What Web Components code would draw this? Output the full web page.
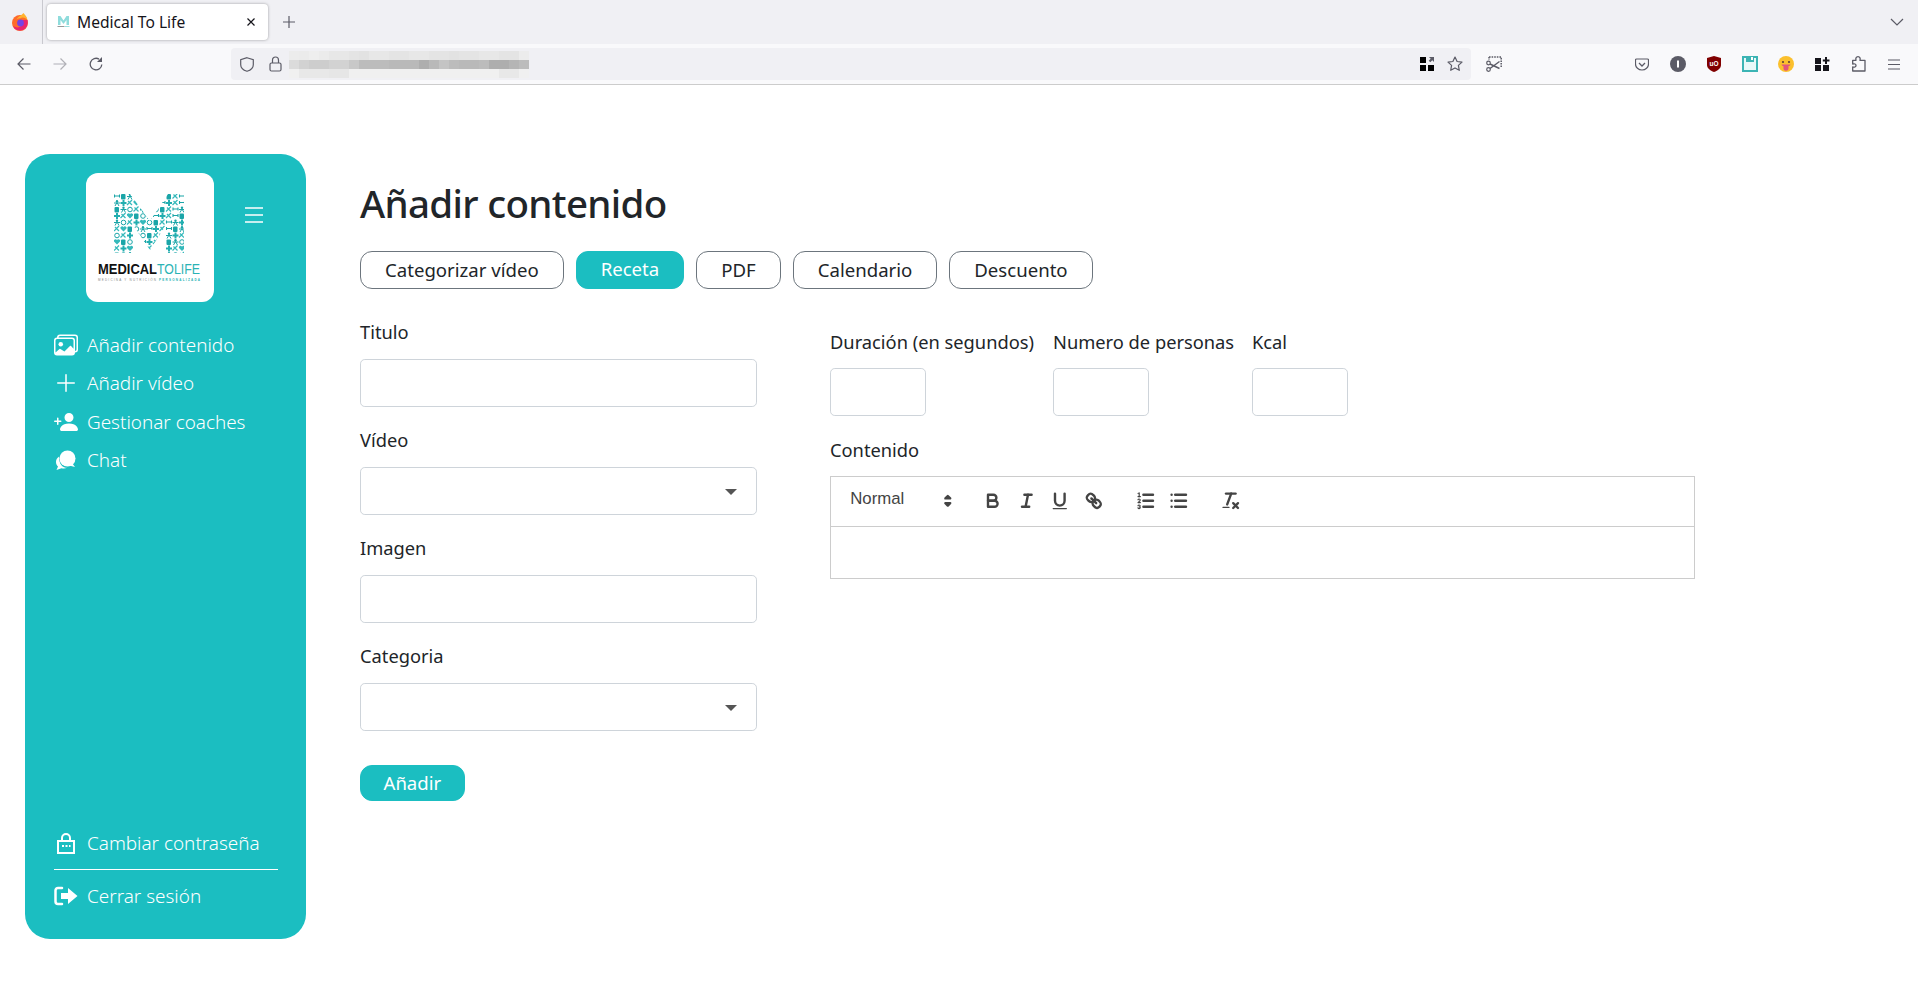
<!DOCTYPE html>
<html lang="es">
<head>
<meta charset="utf-8">
<title>Medical To Life</title>
<style>
  html, body { margin: 0; padding: 0; background: #fff; }
  body { font-family: "Noto Sans", sans-serif; color: #212529; }
</style>
</head>
<body>
<app-root></app-root>
<script>
// base class: every element just renders getStyles + getMarkup in its shadow root
class BaseElement extends HTMLElement
{
    constructor()
    {
        super();
        this.attachShadow({ mode: 'open' });
    }
    getStyles() { return ''; }
    getMarkup() { return ''; }
    connectedCallback()
    {
        const template = document.createElement('template');
        template.innerHTML = `<style>${this.getStyles()}</style>${this.getMarkup()}`;
        this.shadowRoot.appendChild(template.content.cloneNode(true));
    }
}

const stroke = 'fill="none" stroke="currentColor"';

class BrowserChrome extends BaseElement
{
    getStyles()
    {
        return `
            :host { display: block; font-family: "Noto Sans", sans-serif; color: #15141a; }
            svg { display: block; flex: none; }
            .tabs { height: 44px; background: #f0f0f4; display: flex; align-items: flex-start; position: relative; }
            .ff { margin: 13px 0 0 11px; }
            .sep { width: 1px; height: 44px; background: #c9c9cf; margin-left: 13px; }
            .tab { width: 221px; height: 36px; margin: 4px 0 0 4px; box-sizing: border-box; background: #fff; border-radius: 4px;
                   box-shadow: 0 0 3px rgba(0,0,0,.35); display: flex; align-items: center; padding: 0 12px 0 10px; font-size: 15.600px; }
            .tab span { margin-left: 7px; flex: 1; }
            .newtab { margin: 15px 0 0 15px; color: #5b5b66; }
            .chev { position: absolute; right: 14px; top: 18px; color: #5b5b66; }
            .bar { height: 40px; background: #f9f9fb; border-bottom: 1px solid #ccc; display: flex; align-items: center; color: #5b5b66; }
            .url { width: 1240px; height: 32px; margin-left: 128px; background: #f0f0f4; border-radius: 4px; display: flex; align-items: center; position: relative; }
            .blur { display: grid; grid-template-columns: repeat(24, 10px); grid-auto-rows: 9px; }
            .blur i { display: block; }
        `;
    }
    getBlur()
    {
        const rows = [
            'ecebeeebe7e7e4e2e7e7e4e4e7e7e4e4e2e4e4e7e7e4e4ec',
            'dbd2cdcdd2d2c8bcbcbcb9b9b9aeb9c4bcb9b9bcaeaeb5bc',
            'f0e8e8e8e6e6f0f0f0f0f0f0f0f0f0f0f0f0f0f0f0e8e8f0'
        ];
        return rows.map(r =>
        {
            let cells = '';
            for (let i = 0; i < 24; i++)
            {
                const g = r.substr(i * 2, 2);
                cells += `<i style="background:#${g}${g}${g}"></i>`;
            }
            return cells;
        }).join('');
    }
    getMarkup()
    {
        return `
        <div class="tabs">
            <svg class="ff" width="18" height="18" viewBox="0 0 18 18">
                <circle cx="9" cy="10" r="8" fill="#ff6a2b"/>
                <path d="M16.500 7c1 4-1 10.500-7.500 10.500C6 17.500 3 16 2 13c3 2 7 2 9-1 1-2 0-4-2-5z" fill="#e8256f"/>
                <circle cx="9.500" cy="10" r="3.400" fill="#7542e5"/>
                <path d="M12.500 0c1.500 2 3.500 3.500 4 7-1.500-2-5-3.500-7.500-1.500-1.500-.5-3 .5-3.500 1.500C6 4 9 3.500 12.500 0z" fill="#ffb32f"/>
            </svg>
            <div class="sep"></div>
            <div class="tab">
                <svg width="13" height="14" viewBox="0 0 13 14">
                    <path d="M1 1h2.500L6.500 5.500 9.500 1H12v9H9.500V5L6.500 9 3.500 5v5H1z" fill="#8fdcdc"/>
                    <rect x="0.500" y="11" width="7" height="1" fill="#999"/><rect x="7.500" y="11" width="5" height="1" fill="#9bdede"/>
                </svg>
                <span>Medical To Life</span>
                <svg width="10" height="10" viewBox="0 0 10 10"><path d="M1.500 1.500l7 7M8.500 1.500l-7 7" ${stroke} stroke-width="1.200"/></svg>
            </div>
            <svg class="newtab" width="12" height="14" viewBox="0 0 12 14"><path d="M6 1v12M0 7h12" ${stroke} stroke-width="1.200"/></svg>
            <svg class="chev" width="14" height="8" viewBox="0 0 14 8"><path d="M1 1l6 6 6-6" ${stroke} stroke-width="1.200"/></svg>
        </div>
        <div class="bar">
            <svg style="margin-left:17px" width="14" height="14" viewBox="0 0 14 14"><path d="M13.500 7H1.500M6.500 1.500L1 7l5.500 5.500" ${stroke} stroke-width="1.200"/></svg>
            <svg style="margin-left:22px;opacity:.45" width="14" height="14" viewBox="0 0 14 14"><path d="M.5 7h12M7.500 1.500L13 7l-5.500 5.500" ${stroke} stroke-width="1.200"/></svg>
            <svg style="margin-left:22px" width="14" height="14" viewBox="0 0 14 14"><path d="M12.800 7.500A5.800 5.800 0 1 1 10 2.100" ${stroke} stroke-width="1.300"/><path d="M13 0v5H8z" fill="currentColor"/></svg>
            <div class="url">
                <svg style="margin-left:9px" width="14" height="15" viewBox="0 0 14 15"><path d="M7 .7l6.300 2v5c0 3.300-3 5.500-6.300 6.600C3.700 13.200.7 11 .7 7.700v-5z" ${stroke} stroke-width="1.200"/></svg>
                <svg style="margin-left:15px" width="13" height="16" viewBox="0 0 13 16"><rect x="1" y="7" width="11" height="8" rx="1.500" ${stroke} stroke-width="1.200"/><path d="M3.500 7V4a3 3 0 0 1 6 0v3" ${stroke} stroke-width="1.200"/></svg>
                <div class="blur" style="margin-left:7px">${this.getBlur()}</div>
                <svg style="position:absolute;left:1189px" width="14" height="14" viewBox="0 0 14 14" fill="#000"><rect width="6" height="6"/><rect y="8" width="6" height="6"/><rect x="8" y="8" width="6" height="6"/><path d="M9 0h5v5l-1.700-1.700-2 2-1.600-1.600 2-2z" fill="#5b5b66"/></svg>
                <svg style="position:absolute;left:1216px" width="16" height="16" viewBox="0 0 16 16"><path d="M8 1l2.100 4.500 4.900.6-3.600 3.300.9 4.900L8 11.900l-4.300 2.400.9-4.900L1 6.100l4.900-.6z" ${stroke} stroke-width="1.200" stroke-linejoin="round"/></svg>
            </div>
            <svg style="margin-left:15px" width="16" height="16" viewBox="0 0 16 16"><path d="M3 1h12.200v10" ${stroke} stroke-width="1.500" stroke-dasharray="1.600 1"/><path d="M3 1v3" ${stroke} stroke-width="1.500" stroke-dasharray="1.600 1"/><circle cx="2.500" cy="7" r="1.800" ${stroke} stroke-width="1.200"/><circle cx="2.500" cy="13.500" r="1.800" ${stroke} stroke-width="1.200"/><path d="M4 8l9.500 4.500M4 12.500L13.500 5.500" ${stroke} stroke-width="1.400"/></svg>
            <svg style="margin-left:133px" width="14" height="13" viewBox="0 0 14 13"><path d="M1.500 1h11c.5 0 1 .4 1 1v4c0 3.500-3 6-6.500 6S.5 9.500.5 6V2c0-.6.500-1 1-1z" ${stroke} stroke-width="1.200"/><path d="M4 5l3 3 3-3" ${stroke} stroke-width="1.300"/></svg>
            <svg style="margin-left:21px" width="16" height="16" viewBox="0 0 16 16"><circle cx="8" cy="8" r="8" fill="#5b5b66"/><rect x="7" y="4.500" width="2" height="7" fill="#fff"/></svg>
            <svg style="margin-left:21px" width="14" height="16" viewBox="0 0 14 16"><path d="M7 0l7 2v7c0 3-3 5.500-7 7-4-1.500-7-4-7-7V2z" fill="#800000"/><text x="7" y="10" font-size="6.500" font-family="Liberation Sans" font-weight="700" fill="#fff" text-anchor="middle">uO</text></svg>
            <svg style="margin-left:21px" width="16" height="16" viewBox="0 0 16 16"><rect x="1" y="1" width="14" height="14" fill="#e8f8f8" stroke="#3cb4b4" stroke-width="2"/><rect x="4" y="0" width="8" height="6" fill="#3cb4b4"/><rect x="9" y="1" width="2" height="3" fill="#fff"/></svg>
            <svg style="margin-left:20px" width="16" height="16" viewBox="0 0 16 16"><circle cx="8" cy="8" r="8" fill="#fbc02d"/><circle cx="5" cy="6" r="1.100" fill="#5d4037"/><circle cx="11" cy="6" r="1.100" fill="#5d4037"/><path d="M3.500 8.500h9c-.4 1-1.200 1.500-2 1.700v2.300c0 1.300-1.100 2.300-2.500 2.300s-2.500-1-2.500-2.300v-2.300c-.8-.2-1.600-.7-2-1.700z" fill="#e2557b"/></svg>
            <svg style="margin-left:21px" width="15" height="14" viewBox="0 0 15 14" fill="#15141a"><rect width="6" height="6" y="1"/><rect y="8" width="6" height="6"/><rect x="8" y="8" width="6" height="6"/><path d="M10 0h2v2.500h2.500v2H12V7h-2V4.500H7.800v-2H10z"/></svg>
            <svg style="margin-left:22px" width="14" height="16" viewBox="0 0 14 16"><path d="M.7 4.300H4C3.500 2.500 4 .7 6 .7S8.500 2.500 8 4.300h5V15H.7v-4c1.800.5 3.300 0 3.300-1.500S2.500 7.500.7 8z" ${stroke} stroke-width="1.300" stroke-linejoin="round"/></svg>
            <svg style="margin-left:22px" width="12" height="11" viewBox="0 0 12 11"><path d="M0 1h12M0 5.500h12M0 10h12" ${stroke} stroke-width="1.200"/></svg>
        </div>`;
    }
}
customElements.define('browser-chrome', BrowserChrome);

class BrandLogo extends BaseElement
{
    getStyles()
    {
        return `
            :host { display: block; width: 128px; height: 129px; background: #fff; border-radius: 12px; }
            svg { display: block; }
        `;
    }
    // the M is a mosaic of tiny medical pictograms
    getMosaic()
    {
        const shapes = [
            (x, y) => `<path d="M${x} ${y + 2.500}h6M${x + .5} ${y + 1}v3M${x + 5.500} ${y + 1}v3" fill="none" stroke="#1aa5a8" stroke-width="1.100"/>`,
            (x, y) => `<circle cx="${x + 3}" cy="${y + 3}" r="2.300" fill="none" stroke="#1aa5a8" stroke-width="1"/>`,
            (x, y) => `<path d="M${x + 2} ${y}h2v2h2v2h-2v2h-2v-2h-2v-2h2z" fill="#22aeb0"/>`,
            (x, y) => `<rect x="${x + .5}" y="${y + .5}" width="4.500" height="5.500" rx="1" fill="#1aa5a8"/>`,
            (x, y) => `<path d="M${x + 3} ${y + 5.500}L${x} ${y + 2.500}a1.600 1.600 0 0 1 3-1.200 1.600 1.600 0 0 1 3 1.200z" fill="#35b9bb"/>`,
            (x, y) => `<circle cx="${x + 3}" cy="${y + 1.200}" r="1.200" fill="#1aa5a8"/><path d="M${x + 1} ${y + 6}l2-3.500 2 3.500M${x} ${y + 3}h6" fill="none" stroke="#1aa5a8" stroke-width="1"/>`,
            (x, y) => `<path d="M${x} ${y + 5}L${x + 5} ${y}M${x + 1} ${y + 1}l4 4" fill="none" stroke="#35b9bb" stroke-width="1.200"/>`
        ];
        const order = [0, 3, 5, 1, 6, 2, 4, 1, 3, 6, 0, 5, 2, 6, 4, 3, 1, 5, 0, 2, 6];
        let out = '';
        let k = 0;
        for (let y = 20.500; y < 80; y += 6.500)
        {
            for (let x = 28; x < 98; x += 6.500)
            {
                out += shapes[order[k % order.length]](x, y);
                k += 1;
            }
        }
        return out;
    }
    getMarkup()
    {
        return `
        <svg width="128" height="129" viewBox="0 0 128 129">
            <defs>
                <clipPath id="em"><path d="M28 21h16l20 27 18-27h16v59H80V52L64 77 47 52v28H28z"/></clipPath>
            </defs>
            <g clip-path="url(#em)">${this.getMosaic()}</g>
            <text x="12" y="100.500" font-family="Liberation Sans, sans-serif" font-weight="700" font-size="14" textLength="59" lengthAdjust="spacingAndGlyphs" fill="#111">MEDICAL</text>
            <text x="71" y="100.500" font-family="Liberation Sans, sans-serif" font-size="14" textLength="43" lengthAdjust="spacingAndGlyphs" fill="#2bb3b5">TOLIFE</text>
            <text x="12" y="107.500" font-family="Liberation Sans, sans-serif" font-size="3" textLength="58" fill="#888">MEDICINA Y NUTRICIÓN</text>
            <text x="73" y="107.500" font-family="Liberation Sans, sans-serif" font-weight="700" font-size="3" textLength="41" fill="#2bb3b5">PERSONALIZADA</text>
        </svg>`;
    }
}
customElements.define('brand-logo', BrandLogo);

class NavItem extends BaseElement
{
    getStyles()
    {
        return `
            :host { display: flex; align-items: center; height: 38.300px; color: #fff; font-size: 18.900px; font-weight: 300; }
            .ico { width: 24px; height: 24px; margin-right: 9px; display: flex; align-items: center; justify-content: center; flex: none; }
        `;
    }
    getMarkup()
    {
        return `<span class="ico"><slot name="icon"></slot></span><slot></slot>`;
    }
}
customElements.define('nav-item', NavItem);

class SideBar extends BaseElement
{
    getStyles()
    {
        return `
            :host { display: flex; flex-direction: column; box-sizing: border-box; width: 281px; height: 785px; flex: none;
                    background: #1bbec1; border-radius: 25px; padding: 19px 28px 24px 29px; }
            .top { display: flex; align-items: flex-start; margin-left: 32px; margin-bottom: 24px; }
            .burger { margin: 34px 0 0 31px; display: block; }
            .grow { flex: 1; }
            hr { border: 0; height: 1px; background: #fff; margin: 7px 0 7px; }
        `;
    }
    getMarkup()
    {
        return `
        <div class="top">
            <brand-logo></brand-logo>
            <svg class="burger" width="18" height="16" viewBox="0 0 18 16"><path d="M0 1h18M0 8h18M0 15h18" fill="none" stroke="#fff" stroke-width="1.300"/></svg>
        </div>
        <nav>
            <nav-item><svg slot="icon" width="24" height="24" viewBox="0 0 16 16" fill="#fff"><path d="M4.502 9a1.500 1.500 0 1 0 0-3 1.500 1.500 0 0 0 0 3z"/><path d="M14.002 13a2 2 0 0 1-2 2h-10a2 2 0 0 1-2-2V5A2 2 0 0 1 2 3a2 2 0 0 1 2-2h10a2 2 0 0 1 2 2v8a2 2 0 0 1-1.998 2zM14 2H4a1 1 0 0 0-1 1h9.002a2 2 0 0 1 2 2v7A1 1 0 0 0 15 11V3a1 1 0 0 0-1-1zM2.002 4a1 1 0 0 0-1 1v8l2.646-2.354a.5.5 0 0 1 .63-.062l2.660 1.773 3.710-3.710a.5.5 0 0 1 .577-.094l1.777 1.947V5a1 1 0 0 0-1-1h-10z"/></svg>Añadir contenido</nav-item>
            <nav-item><svg slot="icon" width="24" height="24" viewBox="0 0 16 16" fill="#fff"><path fill-rule="evenodd" d="M8 2a.5.5 0 0 1 .5.5v5h5a.5.5 0 0 1 0 1h-5v5a.5.5 0 0 1-1 0v-5h-5a.5.5 0 0 1 0-1h5v-5A.5.5 0 0 1 8 2Z"/></svg>Añadir vídeo</nav-item>
            <nav-item><svg slot="icon" width="24" height="24" viewBox="0 0 16 16" fill="#fff"><g transform="translate(16 0) scale(-1 1)"><path d="M1 14s-1 0-1-1 1-4 6-4 6 3 6 4-1 1-1 1H1zm5-6a3 3 0 1 0 0-6 3 3 0 0 0 0 6z"/><path fill-rule="evenodd" d="M13.500 5a.5.5 0 0 1 .5.5V7h1.500a.5.5 0 0 1 0 1H14v1.500a.5.5 0 0 1-1 0V8h-1.500a.5.5 0 0 1 0-1H13V5.500a.5.5 0 0 1 .5-.5z"/></g></svg>Gestionar coaches</nav-item>
            <nav-item><svg slot="icon" width="22" height="22" viewBox="0 0 22 22" fill="#fff"><circle cx="12.500" cy="9.500" r="8"/><path d="M17 14l3 4-6-1.500z"/><path d="M4.200 7.500C1.800 9 1 11 1 13c0 2 1 3.500 2 4.500L1.500 21l5-1.800c2 .6 4 .4 5.600-.4-4 0-8.400-3-7.900-11.300z"/></svg>Chat</nav-item>
        </nav>
        <div class="grow"></div>
        <nav-item><svg slot="icon" width="20" height="22" viewBox="0 0 20 22"><path d="M6 9V6a4 4 0 0 1 8 0v3" fill="none" stroke="#fff" stroke-width="2"/><rect x="2" y="9" width="16" height="12" fill="none" stroke="#fff" stroke-width="2"/><path d="M6 14h2M9.500 14h2M13 14h1.500" stroke="#fff" stroke-width="2"/></svg>Cambiar contraseña</nav-item>
        <hr>
        <nav-item><svg slot="icon" width="24" height="20" viewBox="0 0 24 20" fill="#fff"><path d="M8 2H4a2.500 2.500 0 0 0-2.500 2.500v11A2.500 2.500 0 0 0 4 18h4" fill="none" stroke="#fff" stroke-width="2.500" stroke-linecap="round"/><path d="M7 7h7V2l9.500 8-9.500 8v-5H7z"/></svg>Cerrar sesión</nav-item>`;
    }
}
customElements.define('side-bar', SideBar);

class PillButton extends BaseElement
{
    getStyles()
    {
        return `
            :host { display: inline-flex; align-items: center; justify-content: center; box-sizing: border-box; height: 38px; padding: 0 24px 1px;
                    border: 1px solid #6c757d; border-radius: 12px; font-size: 18.600px; color: #212529; background: #fff; white-space: nowrap; }
            :host([active]) { background: #1bbec1; border-color: #1bbec1; color: #fff; padding-bottom: 3px; }
        `;
    }
    getMarkup() { return `<slot></slot>`; }
}
customElements.define('pill-button', PillButton);

class FormField extends BaseElement
{
    getStyles()
    {
        return `
            :host { display: block; font-size: 18.300px; }
            label { display: block; height: 27px; line-height: 27.500px; margin-bottom: var(--label-gap, 14px); white-space: nowrap; }
            .box { box-sizing: border-box; height: 48px; width: var(--box-width, 100%); border: 1px solid #ced4da; border-radius: 4.800px; background: #fff; position: relative; }
            :host([select]) .box::after { content: ""; position: absolute; right: 19px; top: 21px; border: 6px solid transparent; border-top: 6px solid #555; border-bottom: 0; }
        `;
    }
    getMarkup()
    {
        return `<label><slot></slot></label><div class="box"></div>`;
    }
}
customElements.define('form-field', FormField);

class RichEditor extends BaseElement
{
    getStyles()
    {
        return `
            :host { display: block; box-sizing: border-box; height: 103px; border: 1px solid #ccc; }
            .bar { height: 50px; box-sizing: border-box; border-bottom: 1px solid #ccc; padding: 9px 9.600px 0; display: flex; align-items: flex-start; color: #444; }
            .picker { width: 117.600px; height: 29px; padding-left: 9.600px; box-sizing: border-box; position: relative; font: 500 16.800px/26px "Liberation Sans", sans-serif; }
            .picker svg { position: absolute; right: 0; top: 3.700px; }
            .group { display: flex; margin-left: 18px; }
            .btn { width: 33.600px; height: 28.800px; display: flex; align-items: center; justify-content: center; }
            svg { display: block; }
            .s { fill: none; stroke: #444; stroke-width: 2; stroke-linecap: round; stroke-linejoin: round; }
            .t { fill: #444; stroke: #444; stroke-width: 2; stroke-linecap: round; stroke-linejoin: round; }
            .n { fill: none; stroke: #444; stroke-width: 1; stroke-linecap: round; stroke-linejoin: round; }
            .f { fill: #444; }
        `;
    }
    icon(body)
    {
        return `<span class="btn"><svg width="21.600" height="21.600" viewBox="0 0 18 18">${body}</svg></span>`;
    }
    getMarkup()
    {
        return `
        <div class="bar">
            <div class="picker">Normal
                <svg width="21.600" height="21.600" viewBox="0 0 18 18"><polygon class="t" points="7 11 9 13 11 11 7 11"/><polygon class="t" points="7 7 9 5 11 7 7 7"/></svg>
            </div>
            <div class="group">
                ${this.icon('<path class="s" d="M5,4H9.500A2.500,2.500,0,0,1,12,6.500v0A2.500,2.500,0,0,1,9.500,9H5A0,0,0,0,1,5,9V4A0,0,0,0,1,5,4Z"/><path class="s" d="M5,9h5.500A2.500,2.500,0,0,1,13,11.500v0A2.500,2.500,0,0,1,10.500,14H5a0,0,0,0,1,0,0V9A0,0,0,0,1,5,9Z"/>')}
                ${this.icon('<line class="s" x1="7" x2="13" y1="4" y2="4"/><line class="s" x1="5" x2="11" y1="14" y2="14"/><line class="s" x1="8" x2="10" y1="14" y2="4"/>')}
                ${this.icon('<path class="s" d="M5,3V9a4.012,4.012,0,0,0,4,4H9a4.012,4.012,0,0,0,4-4V3"/><rect class="f" x="3" y="15" width="12" height="1" rx=".5" ry=".5"/>')}
                ${this.icon('<line class="s" x1="7" x2="11" y1="7" y2="11"/><path class="s" d="M8.900,4.577a3.476,3.476,0,0,1,.36,4.679A3.476,3.476,0,0,1,4.577,8.900C3.185,7.500,2.035,6.400,4.217,4.217S7.500,3.185,8.900,4.577Z"/><path class="s" d="M13.423,9.100a3.476,3.476,0,0,0-4.679-.36,3.476,3.476,0,0,0,.36,4.679c1.392,1.392,2.500,2.542,4.679.36S14.815,10.500,13.423,9.100Z"/>')}
            </div>
            <div class="group">
                ${this.icon('<line class="s" x1="7" x2="15" y1="4" y2="4"/><line class="s" x1="7" x2="15" y1="9" y2="9"/><line class="s" x1="7" x2="15" y1="14" y2="14"/><line class="n" x1="2.500" x2="4.500" y1="5.500" y2="5.500"/><path class="f" d="M3.500,6A0.500,0.500,0,0,1,3,5.500V3.085l-0.276.138A0.500,0.500,0,0,1,2.053,3c-0.124-.247-0.023-0.324.224-0.447l1-.5A0.500,0.500,0,0,1,4,2.500v3A0.500,0.500,0,0,1,3.500,6Z"/><path class="n" d="M4.500,10.500h-2c0-.234,1.850-1.076,1.850-2.234A0.959,0.959,0,0,0,2.500,8.156"/><path class="n" d="M2.500,14.846a0.959,0.959,0,0,0,1.850-.109A0.700,0.700,0,0,0,3.750,14a0.688,0.688,0,0,0,.6-0.736,0.959,0.959,0,0,0-1.850-.109"/>')}
                ${this.icon('<line class="s" x1="6" x2="15" y1="4" y2="4"/><line class="s" x1="6" x2="15" y1="9" y2="9"/><line class="s" x1="6" x2="15" y1="14" y2="14"/><line class="s" x1="3" x2="3" y1="4" y2="4"/><line class="s" x1="3" x2="3" y1="9" y2="9"/><line class="s" x1="3" x2="3" y1="14" y2="14"/>')}
            </div>
            <div class="group">
                ${this.icon('<line class="s" x1="5" x2="13" y1="3" y2="3"/><line class="s" x1="6" x2="9.350" y1="12" y2="3"/><line class="s" x1="11" x2="15" y1="11" y2="15"/><line class="s" x1="15" x2="11" y1="11" y2="15"/><rect class="f" x="2" y="14" width="6" height="1" rx=".5" ry=".5"/>')}
            </div>
        </div>`;
    }
}
customElements.define('rich-editor', RichEditor);

class LabelText extends BaseElement
{
    getStyles()
    {
        return `:host { display: block; font-size: 18.300px; height: 27px; line-height: 27.500px; margin-bottom: 13px; }`;
    }
    getMarkup() { return `<slot></slot>`; }
}
customElements.define('label-text', LabelText);

class ContentForm extends BaseElement
{
    getStyles()
    {
        return `
            :host { display: block; flex: 1; padding: 94px 0 0 54px; font-family: "Noto Sans", sans-serif; color: #212529; }
            h1 { margin: 0; font-size: 38.500px; font-weight: 500; line-height: 48px; letter-spacing: -0.670px; }
            .tabs { display: flex; gap: 12px; margin-top: 24px; }
            .cols { display: flex; gap: 73px; margin-top: 29px; align-items: flex-start; }
            .left { width: 397px; }
            .left form-field { margin-bottom: 19px; }
            .right { width: 865px; padding-top: 10px; --label-gap: 13px; }
            .nums { display: grid; grid-template-columns: 205px 181px auto; column-gap: 18px; --box-width: 96px; margin-bottom: 20px; }
            pill-button.send { margin-top: 15px; height: 36px; padding: 0 22.500px 2px; }
        `;
    }
    getMarkup()
    {
        return `
        <h1>Añadir contenido</h1>
        <div class="tabs">
            <pill-button>Categorizar vídeo</pill-button>
            <pill-button active>Receta</pill-button>
            <pill-button>PDF</pill-button>
            <pill-button>Calendario</pill-button>
            <pill-button>Descuento</pill-button>
        </div>
        <div class="cols">
            <div class="left">
                <form-field>Titulo</form-field>
                <form-field select>Vídeo</form-field>
                <form-field>Imagen</form-field>
                <form-field select>Categoria</form-field>
                <pill-button class="send" active>Añadir</pill-button>
            </div>
            <div class="right">
                <div class="nums">
                    <form-field>Duración (en segundos)</form-field>
                    <form-field>Numero de personas</form-field>
                    <form-field>Kcal</form-field>
                </div>
                <label-text>Contenido</label-text>
                <rich-editor></rich-editor>
            </div>
        </div>`;
    }
}
customElements.define('content-form', ContentForm);

class AppRoot extends BaseElement
{
    getStyles()
    {
        return `
            :host { display: block; height: 1008px; overflow: hidden; background: #fff; }
            .page { display: flex; align-items: flex-start; padding-left: 25px; }
            side-bar { margin-top: 69px; }
        `;
    }
    getMarkup()
    {
        return `
        <browser-chrome></browser-chrome>
        <div class="page">
            <side-bar></side-bar>
            <content-form></content-form>
        </div>`;
    }
}
customElements.define('app-root', AppRoot);
</script>
</body>
</html>
